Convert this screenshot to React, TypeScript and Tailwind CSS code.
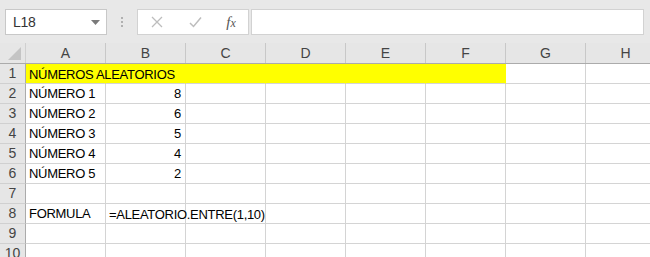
import React from "react";

const cols = ["A", "B", "C", "D", "E", "F", "G", "H"];

type Cell = { text?: string; align?: "left" | "right"; yellow?: boolean };

const data: Record<number, Record<string, Cell>> = {
  1: {
    A: { text: "NÚMEROS ALEATORIOS", yellow: true },
    B: { yellow: true },
    C: { yellow: true },
    D: { yellow: true },
    E: { yellow: true },
    F: { yellow: true },
  },
  2: { A: { text: "NÚMERO 1" }, B: { text: "8", align: "right" } },
  3: { A: { text: "NÚMERO 2" }, B: { text: "6", align: "right" } },
  4: { A: { text: "NÚMERO 3" }, B: { text: "5", align: "right" } },
  5: { A: { text: "NÚMERO 4" }, B: { text: "4", align: "right" } },
  6: { A: { text: "NÚMERO 5" }, B: { text: "2", align: "right" } },
  8: { A: { text: "FORMULA" }, B: { text: "=ALEATORIO.ENTRE(1,10)" } },
};

const font = { fontFamily: '"Liberation Sans", Arial, sans-serif' };

export default function App() {
  const rows = Array.from({ length: 10 }, (_, i) => i + 1);
  return (
    <div
      className="w-[650px] h-[257px] overflow-hidden bg-white text-[14px] text-black"
      style={font}
    >
      {/* toolbar */}
      <div className="h-[43px] bg-[#e8e8e8] flex items-start pt-[9px]">
        <div className="ml-[5px] w-[102px] h-[26px] bg-white border border-[#c8c8c8] flex items-center justify-between pl-[7px] pr-[6px] text-[#333]">
          <span className="text-[14px] tracking-[-0.3px]">L18</span>
          <svg width="9" height="5" viewBox="0 0 9 5">
            <path d="M0 0 L9 0 L4.5 5 Z" fill="#7a7a7a" />
          </svg>
        </div>
        <div className="w-[30px] h-[26px] flex flex-col items-center justify-center gap-[2px]">
          <span className="w-[2px] h-[2px] bg-[#b0b0b0]" />
          <span className="w-[2px] h-[2px] bg-[#b0b0b0]" />
          <span className="w-[2px] h-[2px] bg-[#b0b0b0]" />
        </div>
        <div className="w-[112px] h-[26px] bg-white border border-[#d2d2d2] flex items-center">
          <div className="w-[38px] flex justify-center">
            <svg width="12" height="12" viewBox="0 0 12 12">
              <path d="M1 1 L11 11 M11 1 L1 11" stroke="#bdbdbd" strokeWidth="1.3" />
            </svg>
          </div>
          <div className="w-[38px] flex justify-center">
            <svg width="13" height="12" viewBox="0 0 13 12">
              <path d="M1 7 L4.5 10.5 L12 1.5" stroke="#bdbdbd" strokeWidth="1.5" fill="none" />
            </svg>
          </div>
          <div className="w-[34px] flex justify-center">
            <span
              className="italic text-[15px] text-[#555]"
              style={{ fontFamily: '"Liberation Serif", "Times New Roman", serif' }}
            >
              f<span className="text-[12px]">x</span>
            </span>
          </div>
        </div>
        <div className="ml-[2px] flex-1 h-[26px] bg-white border border-[#d2d2d2] mr-[6px]" />
      </div>

      {/* column headers */}
      <div className="flex h-[21px] bg-[#e6e6e6] border-b border-[#ababab]">
        <div className="w-[26px] shrink-0 border-r border-[#d0d0d0] flex items-end justify-end pr-[4px] pb-[3px]">
          <svg width="13" height="13" viewBox="0 0 13 13">
            <path d="M13 0 L13 13 L0 13 Z" fill="#c4c4c4" />
          </svg>
        </div>
        {cols.map((c) => (
          <div
            key={c}
            className="w-[80px] shrink-0 border-r border-[#c8c8c8] flex items-center justify-center text-[#444] text-[14px]"
          >
            {c}
          </div>
        ))}
      </div>

      {/* rows */}
      {rows.map((r) => (
        <div key={r} className="flex h-[20px]">
          <div className="w-[26px] shrink-0 bg-[#e6e6e6] border-r border-[#ababab] border-b border-b-[#d0d0d0] flex items-center justify-center text-[#444] text-[14px]">
            {r}
          </div>
          {cols.map((c) => {
            const cell = data[r]?.[c];
            const overflow = r === 8 && c === "B";
            const over = overflow || (r === 1 && c === "A");
            return (
              <div
                key={c}
                className={`relative w-[80px] shrink-0 border-b border-r border-[#d4d4d4] flex items-center text-[13px] tracking-[-0.3px] ${
                  cell?.yellow ? "bg-[#ffff00] border-r-[#ffff00] border-b-[#d4d4d4]" : "bg-white"
                } ${cell?.align === "right" ? "justify-end pr-[4px]" : "pl-[3px]"} ${
                  over ? "z-10" : ""
                }`}
              >
                {cell?.text && (
                  <span className={`whitespace-nowrap ${over ? "absolute left-[3px] top-[1px]" : ""}`}>
                    {cell.text}
                  </span>
                )}
              </div>
            );
          })}
        </div>
      ))}
    </div>
  );
}
